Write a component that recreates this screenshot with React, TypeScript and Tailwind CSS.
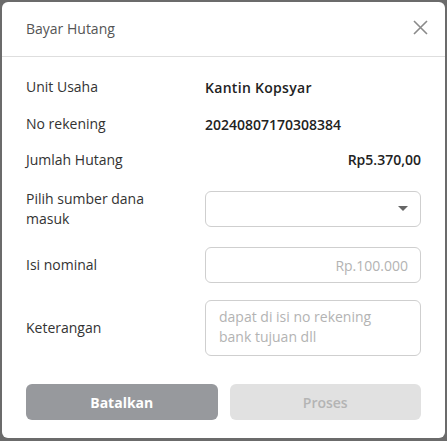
import React from "react";

const Row = ({ label, h, children }: { label: React.ReactNode; h: string; children: React.ReactNode }) => (
  <div className={`flex items-center ${h}`}>
    <div className="w-[179px] shrink-0 text-[14px] leading-[20px] text-[#333]">{label}</div>
    <div className="flex-1">{children}</div>
  </div>
);

const App = () => {
  return (
    <div
      className="w-[447px] h-[441px] bg-[#6b6b6b] p-[2px] pb-[3px]"
      style={{ fontFamily: '"Open Sans", "Noto Sans", sans-serif' }}
    >
      <div className="h-full w-[443px] bg-white rounded-[6px] flex flex-col">
        <div className="h-[55px] shrink-0 flex items-center justify-between pl-[24px] pr-[17px] border-b border-[#dedede]">
          <h2 className="text-[14px] leading-[20px] text-[#555]">Bayar Hutang</h2>
          <svg width="15" height="15" viewBox="0 0 15 15" className="text-[#8a8a8a] -mt-[4px]">
            <path d="M1 1 L14 14 M14 1 L1 14" stroke="currentColor" strokeWidth="1.6" />
          </svg>
        </div>

        <div className="px-[24px] pt-[20px] flex flex-col">
          <Row label="Unit Usaha" h="h-[20px]">
            <span className="text-[14px] leading-[20px] font-semibold text-[#222] tracking-[0.3px]">Kantin Kopsyar</span>
          </Row>
          <div className="h-[17px]" />
          <Row label="No rekening" h="h-[20px]">
            <span className="text-[14px] leading-[20px] font-semibold text-[#222]">20240807170308384</span>
          </Row>
          <div className="h-[16px]" />
          <Row label="Jumlah Hutang" h="h-[20px]">
            <div className="text-right text-[14px] leading-[20px] font-semibold text-[#222]">Rp5.370,00</div>
          </Row>
          <div className="h-[21px]" />
          <Row label={<span>Pilih sumber dana<br />masuk</span>} h="h-[36px]">
            <div className="h-[36px] border border-[#cfcfcf] rounded-[6px] flex items-center justify-end pr-[12px]">
              <svg width="10" height="6" viewBox="0 0 10 6">
                <path d="M0 0 L10 0 L5 5 Z" fill="#666" />
              </svg>
            </div>
          </Row>
          <div className="h-[20px]" />
          <Row label="Isi nominal" h="h-[36px]">
            <div className="h-[36px] border border-[#cfcfcf] rounded-[6px] flex items-center justify-end pr-[12px] text-[14px] text-[#b3b3b3]">
              Rp.100.000
            </div>
          </Row>
          <div className="h-[17px]" />
          <Row label="Keterangan" h="h-[56px]">
            <div className="h-[56px] border border-[#cfcfcf] rounded-[6px] pl-[13px] pt-[6px] text-[14px] leading-[20px] text-[#b3b3b3]">
              dapat di isi no rekening
              <br />
              bank tujuan dll
            </div>
          </Row>
          <div className="mt-[28px] grid grid-cols-2 gap-[12px]">
            <button className="h-[36px] rounded-[6px] bg-[#97999d] text-white text-[14px] font-bold">
              Batalkan
            </button>
            <button className="h-[36px] rounded-[6px] bg-[#e1e1e1] text-[#b4b4b4] text-[14px] font-semibold">
              Proses
            </button>
          </div>
        </div>
      </div>
    </div>
  );
};

export default App;
